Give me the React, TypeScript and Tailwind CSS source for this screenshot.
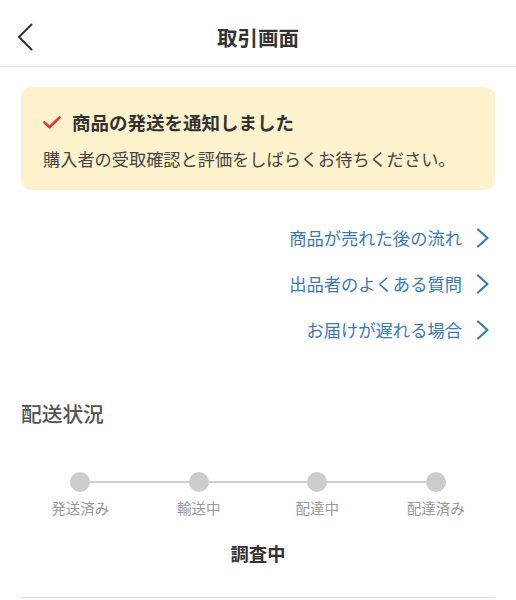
const links = ["商品が売れた後の流れ", "出品者のよくある質問", "お届けが遅れる場合"];
const steps = ["発送済み", "輸送中", "配達中", "配達済み"];

export default function App() {
  return (
    <div
      className="h-[600px] w-[516px] overflow-hidden bg-white text-[#333]"
      style={{ fontFamily: '"Noto Sans CJK JP", "Noto Sans", sans-serif' }}
    >
      <header className="flex h-[67px] items-center border-b border-[#e6e6e6] pt-[8px]">
        <div className="flex w-[60px] pl-[17px]">
          <svg viewBox="0 0 16 28" className="h-[28px] w-[16px]">
            <path d="M14.5 1.5 L2 14 L14.5 26.5" fill="none" stroke="#333" strokeWidth="2" strokeLinecap="round" strokeLinejoin="round" />
          </svg>
        </div>
        <h1 className="flex-1 text-center text-[20.5px] font-bold leading-[28px] text-[#333]">取引画面</h1>
        <div className="w-[60px]" />
      </header>

      <div className="mx-[21px] mt-[20px] rounded-[10px] bg-[#fdf2cc] px-[22px] pb-[19px] pt-[22px]">
        <div className="flex items-center gap-[11px]">
          <svg viewBox="0 0 18 13" className="h-[13px] w-[18px]">
            <path d="M1.5 6.5 L6.5 11.2 L16.5 1.5" fill="none" stroke="#e0343c" strokeWidth="2.6" strokeLinecap="round" strokeLinejoin="round" />
          </svg>
          <span className="text-[18.5px] font-bold leading-[26px] text-[#333]">商品の発送を通知しました</span>
        </div>
        <p className="mt-[12px] text-[17.2px] leading-[24px] text-[#444]">
          購入者の受取確認と評価をしばらくお待ちください。
        </p>
      </div>

      <div className="mt-[36px] flex flex-col items-end gap-[22px] pr-[26px]">
        {links.map((l) => (
          <div key={l} className="flex items-center gap-[14px] text-[#3a79b8]">
            <span className="text-[17.3px] leading-[24px]">{l}</span>
            <svg viewBox="0 0 14 20" className="h-[20px] w-[14px]">
              <path d="M2 1.5 L11.5 10 L2 18.5" fill="none" stroke="#3a79b8" strokeWidth="2.2" strokeLinecap="round" strokeLinejoin="round" />
            </svg>
          </div>
        ))}
      </div>

      <h2 className="ml-[21px] mt-[57px] text-[20.7px] font-medium leading-[28px] text-[#555]">配送状況</h2>

      <div className="mx-[21px] mt-[45px] grid grid-cols-4">
        {steps.map((s, i) => (
          <div key={s} className="flex flex-col items-center">
            <div className="flex w-full items-center">
              <div className={`h-[2px] flex-1 ${i === 0 ? "bg-transparent" : "bg-[#d0d0d0]"}`} />
              <div className="size-[20px] rounded-full bg-[#cccccc]" />
              <div className={`h-[2px] flex-1 ${i === 3 ? "bg-transparent" : "bg-[#d0d0d0]"}`} />
            </div>
            <span className="mt-[6px] text-[14.5px] leading-[20px] text-[#999]">{s}</span>
          </div>
        ))}
      </div>

      <p className="mt-[22px] text-center text-[18.3px] font-bold leading-[26px] text-[#333]">調査中</p>

      <div className="mx-[21px] mt-[31px] border-b border-[#e0e0e0]" />
    </div>
  );
}
